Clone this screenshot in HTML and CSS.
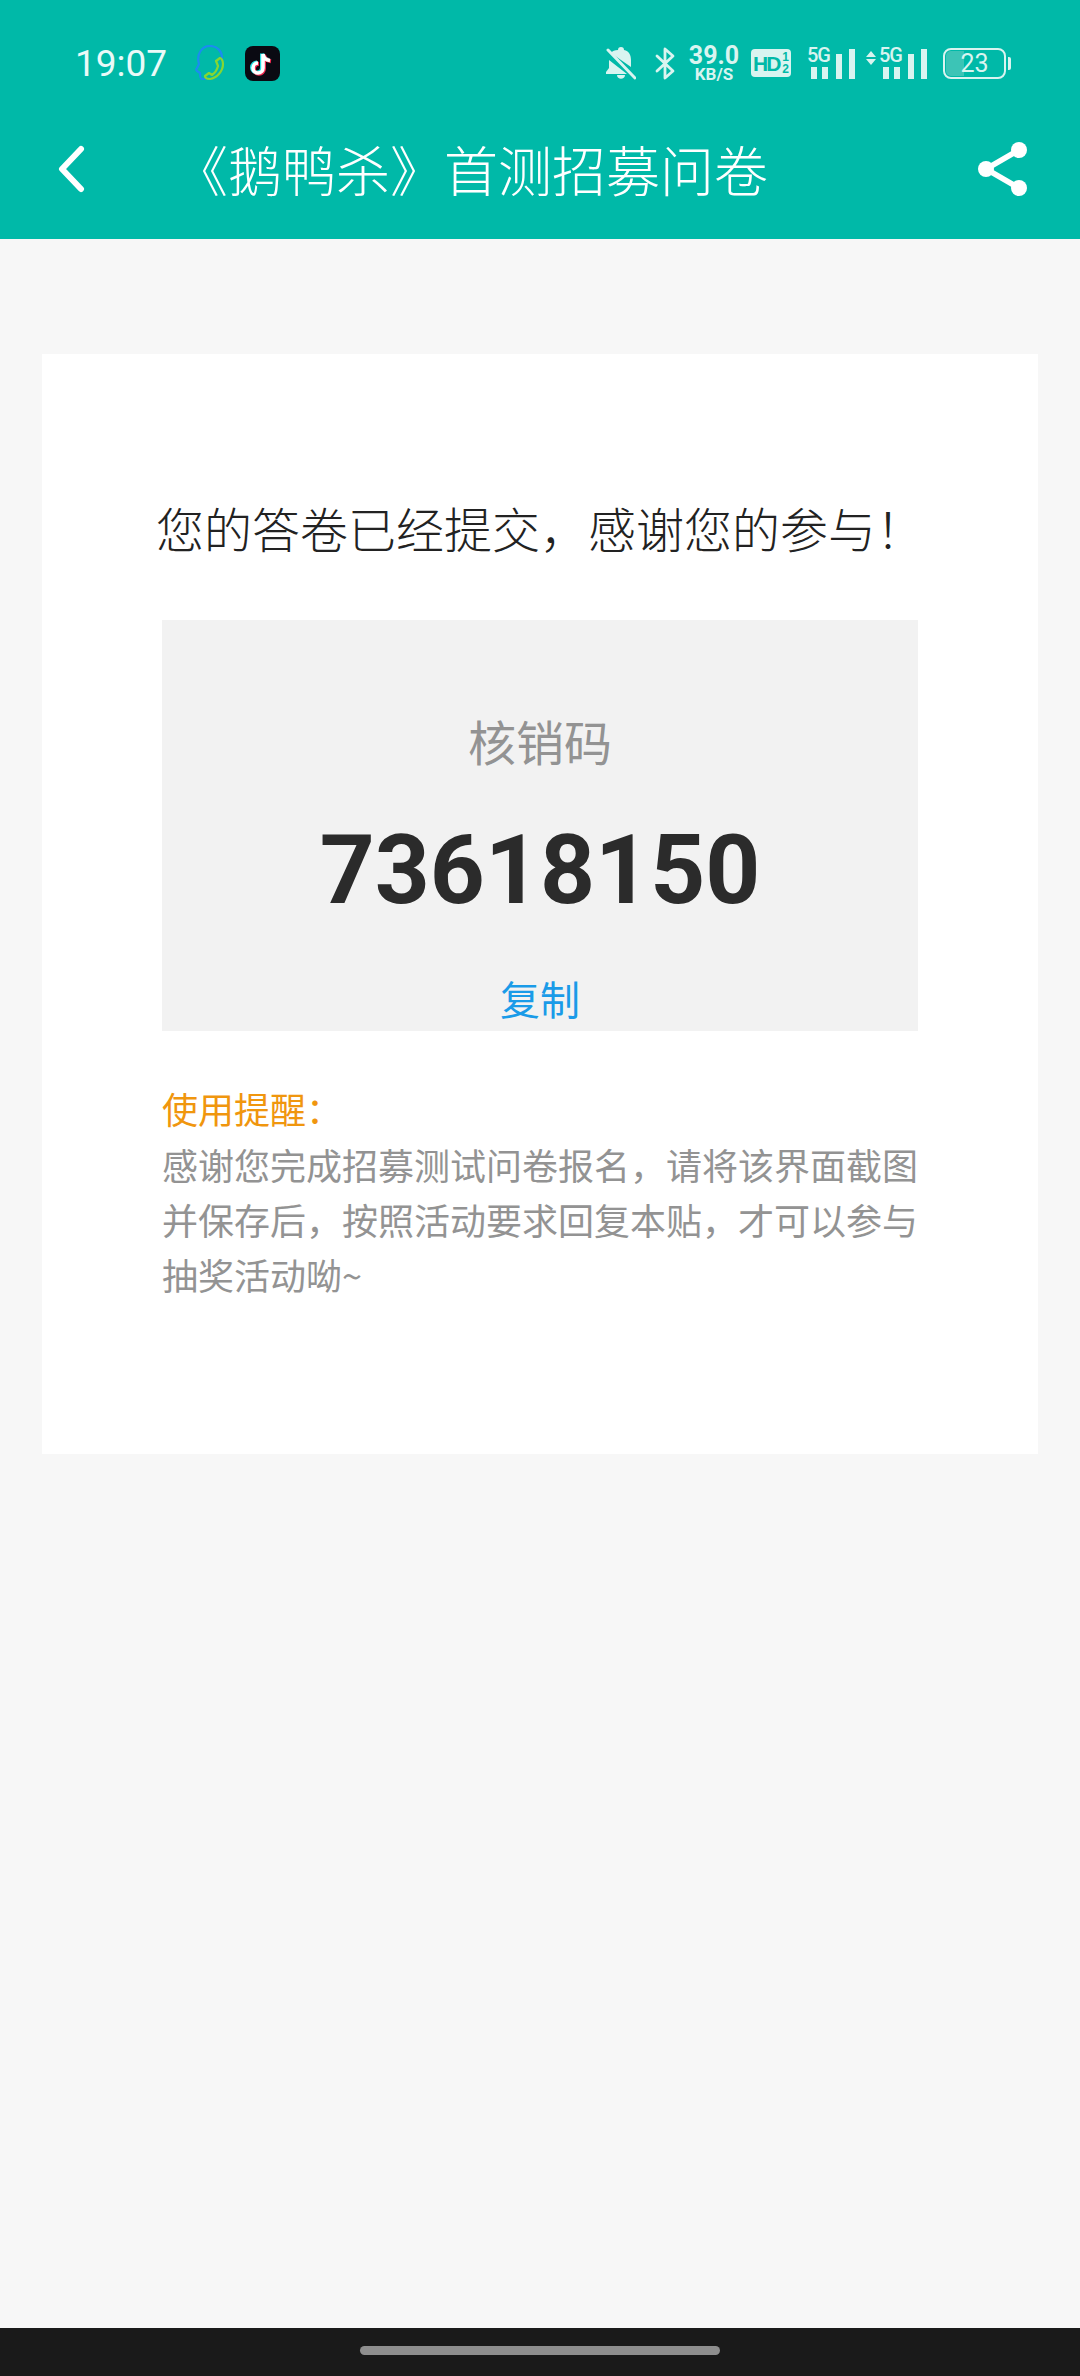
FILE: index.html
```html
<!DOCTYPE html>
<html lang="zh-CN">
<head>
<meta charset="utf-8">
<title>《鹅鸭杀》首测招募问卷</title>
<link rel="stylesheet" href="styles.css">
</head>
<body>
<div class="page">
  <header class="header">
    <div class="status">
      <span class="time">19:07</span>
      <svg class="ic-person" viewBox="0 0 30 36" fill="none" stroke-linecap="round" stroke-linejoin="round">
        <path d="M10 34 H7 C5 34 5 31 5 28 L2 26 C1 25 1 24 2 23 L4 19 C1 9 7 1 15 1 C22 1 27 6 27 13" stroke="#1a8cf0" stroke-width="2.200"/>
        <path d="M21 16 L25 13 C26 13 28 15 28 19 C28 26 22 33 15 34 C11 34 10 32 10 31 L14 28 L17 30 C20 28 22 25 23 21 Z" stroke="#86d632" stroke-width="2.200"/>
      </svg>
      <svg class="ic-tiktok" viewBox="0 0 35 35" fill="none">
        <rect width="35" height="35" rx="8" fill="#0a0a12"/>
        <path d="M18 8 V22 A5 5 0 1 1 13 17 M18 8 C18.500 12 21 14 25 14.500" stroke="#25e0e6" stroke-width="4" transform="translate(-1 -0.500)"/>
        <path d="M18 8 V22 A5 5 0 1 1 13 17 M18 8 C18.500 12 21 14 25 14.500" stroke="#f0294f" stroke-width="4" transform="translate(1 0.800)"/>
        <path d="M18 8 V22 A5 5 0 1 1 13 17 M18 8 C18.500 12 21 14 25 14.500" stroke="#fff" stroke-width="3.600"/>
      </svg>
      <div class="status-right">
        <svg class="ic-bell" viewBox="0 0 30 33">
          <path d="M15 0 C17 0 18 1 18 3 C23 4 25 8 25 13 V20 L5 6 C6 4 9 3 12 3 C12 1 13 0 15 0 Z M3 13 L21 27 H0 V25 L3 21 Z M11 28 H19 C19 33 11 33 11 28 Z" fill="#d9f4f0"/>
          <path d="M2 3 L29 31" stroke="#d9f4f0" stroke-width="3" stroke-linecap="round"/>
        </svg>
        <svg class="ic-bt" viewBox="0 0 21 33" fill="none">
          <path d="M2 9 L18 24 L10 31 V2 L18 9 L2 24" stroke="#d9f4f0" stroke-width="2.800" stroke-linejoin="round" stroke-linecap="round"/>
        </svg>
        <div class="speed"><span class="speed-num">39.0</span><span class="speed-unit">KB/S</span></div>
        <div class="hd"><span class="hd-text">HD</span><span class="hd-frac"><span>1</span><span>2</span></span></div>
        <div class="signal sig-a">
          <div class="sig-col"><span class="sig-label">5G</span><div class="sig-low"><i class="bar bar-s"></i><i class="bar bar-s"></i></div></div>
          <i class="bar bar-m"></i><i class="bar bar-l"></i>
        </div>
        <div class="signal sig-b">
          <svg class="ic-arrows" viewBox="0 0 10 14"><path d="M5 0 L10 6 H0 Z M0 8 H10 L5 14 Z" fill="#d9f4f0"/></svg>
          <div class="sig-col"><span class="sig-label">5G</span><div class="sig-low"><i class="bar bar-s"></i><i class="bar bar-s"></i></div></div>
          <i class="bar bar-m"></i><i class="bar bar-l"></i>
        </div>
        <div class="battery"><div class="bat-body">23</div><i class="bat-nub"></i></div>
      </div>
    </div>
    <nav class="nav">
      <svg class="ic-back" viewBox="0 0 27 48" fill="none"><path d="M23 4 L4 24 L23 44" stroke="#fff" stroke-width="6" stroke-linecap="round" stroke-linejoin="round"/></svg>
      <h1 class="nav-title">《鹅鸭杀》首测招募问卷</h1>
      <svg class="ic-share" viewBox="0 0 50 54" fill="none">
        <path d="M41 8 L8 27 L41 46" stroke="#fff" stroke-width="5.500"/>
        <circle cx="41" cy="8" r="8" fill="#fff"/><circle cx="8" cy="27" r="8" fill="#fff"/><circle cx="41" cy="46" r="8" fill="#fff"/>
      </svg>
    </nav>
  </header>
  <main class="main">
    <section class="card">
      <h2 class="thanks">您的答卷已经提交，感谢您的参与！</h2>
      <div class="code-box">
        <div class="code-label">核销码</div>
        <div class="code-num">73618150</div>
        <div class="code-copy">复制</div>
      </div>
      <div class="tip">
        <div class="tip-title">使用提醒：</div>
        <p class="tip-text">感谢您完成招募测试问卷报名，请将该界面截图并保存后，按照活动要求回复本贴，才可以参与抽奖活动呦~</p>
      </div>
    </section>
  </main>
  <footer class="navbar"><i class="pill"></i></footer>
</div>
</body>
</html>
```
FILE: styles.css
```css
* { box-sizing: border-box; margin: 0; padding: 0; }
html, body { width: 1080px; height: 2376px; overflow: hidden; }
body { font-family: "Noto Sans CJK SC", Roboto, sans-serif; background: #f7f7f7; }
.page { width: 1080px; height: 2376px; display: flex; flex-direction: column; }

.header { height: 239px; background: #00b9a8; color: #fff; flex: none; }
.status { height: 120px; padding: 6px 69px 0 75px; display: flex; align-items: center; }
.time { font-family: Roboto, sans-serif; font-weight: 400; font-size: 37px; color: #eafaf8; width: 91px; line-height: 1; }
.ic-person { width: 30px; height: 36px; margin-left: 29px; flex: none; }
.ic-tiktok { width: 35px; height: 35px; margin-left: 20px; flex: none; }
.status-right { margin-left: auto; display: flex; align-items: center; }
.ic-bell { width: 30px; height: 33px; flex: none; }
.ic-bt { width: 21px; height: 33px; margin-left: 19px; flex: none; }
.speed { margin-left: 14px; width: 48px; display: flex; flex-direction: column; align-items: center; font-family: Roboto, sans-serif; color: #d9f4f0; }
.speed-num { font-size: 25px; font-weight: 700; line-height: 22px; }
.speed-unit { font-size: 17px; font-weight: 700; line-height: 14px; }
.hd { margin-left: 13px; width: 40px; height: 28px; background: #d9f4f0; border-radius: 4px; color: #00b9a8; display: flex; align-items: center; justify-content: center; font-family: "Liberation Sans", sans-serif; font-weight: 700; }
.hd-text { font-size: 21px; letter-spacing: -2px; line-height: 1; }
.hd-frac { display: flex; flex-direction: column; font-size: 12px; line-height: 12px; margin-left: 3px; }
.signal { display: flex; align-items: flex-end; height: 32px; }
.sig-a { margin-left: 16px; }
.sig-b { margin-left: 11px; }
.sig-col { display: flex; flex-direction: column; align-items: flex-start; height: 32px; justify-content: space-between; }
.sig-label { font-family: Roboto, sans-serif; font-weight: 500; font-size: 20px; line-height: 16px; letter-spacing: -1px; color: #d9f4f0; }
.sig-low { display: flex; gap: 5px; margin-left: 4px; }
.bar { display: block; width: 6px; background: #d9f4f0; flex: none; }
.bar-s { height: 12px; }
.bar-m { height: 25px; margin-left: 6px; }
.bar-l { height: 30px; margin-left: 7px; }
.ic-arrows { width: 10px; height: 14px; align-self: flex-start; margin: 4px 3px 0 0; }
.battery { margin-left: 16px; display: flex; align-items: center; }
.bat-body { width: 63px; height: 31px; border: 2px solid #d9f4f0; border-radius: 8px; color: #d9f4f0; font-family: Roboto, sans-serif; font-weight: 400; font-size: 25px; line-height: 25px; text-align: center; background: linear-gradient(to right, #3cc4b6 0 32%, transparent 32%); background-clip: content-box; padding: 1px; }
.bat-nub { display: block; width: 3px; height: 13px; margin-left: 2px; background: #d9f4f0; border-radius: 0 2px 2px 0; }

.nav { height: 119px; display: flex; align-items: center; padding: 0 52px 22px 58px; }
.ic-back { width: 27px; height: 48px; flex: none; }
.nav-title { margin-left: 89px; font-size: 54px; font-weight: 300; line-height: 72px; white-space: nowrap; }
.ic-share { width: 50px; height: 54px; margin-left: auto; flex: none; }

.main { flex: 1; padding: 115px 42px 0; }
.card { background: #fff; height: 1100px; padding-top: 137px; display: flex; flex-direction: column; align-items: center; }
.thanks { font-size: 48px; font-weight: 300; line-height: 72px; color: #222; white-space: nowrap; }
.code-box { margin-top: 57px; width: 756px; height: 411px; background: #f2f2f2; padding-top: 84px; text-align: center; }
.code-label { font-size: 48px; line-height: 72px; color: #939393; }
.code-num { margin-top: 38px; font-family: Roboto, sans-serif; font-weight: 700; font-size: 96px; line-height: 112px; color: #2b2b2b; }
.code-copy { margin-top: 42px; font-size: 40px; line-height: 60px; color: #1a9be8; }
.tip { width: 756px; margin-top: 48px; font-size: 36px; line-height: 55px; }
.tip-title { color: #f0960e; line-height: 58px; }
.tip-text { color: #939393; }

.navbar { height: 48px; background: #1a1a1a; flex: none; display: flex; justify-content: center; padding-top: 18px; }
.pill { display: block; width: 360px; height: 9px; border-radius: 5px; background: #8e8e8e; }
```
